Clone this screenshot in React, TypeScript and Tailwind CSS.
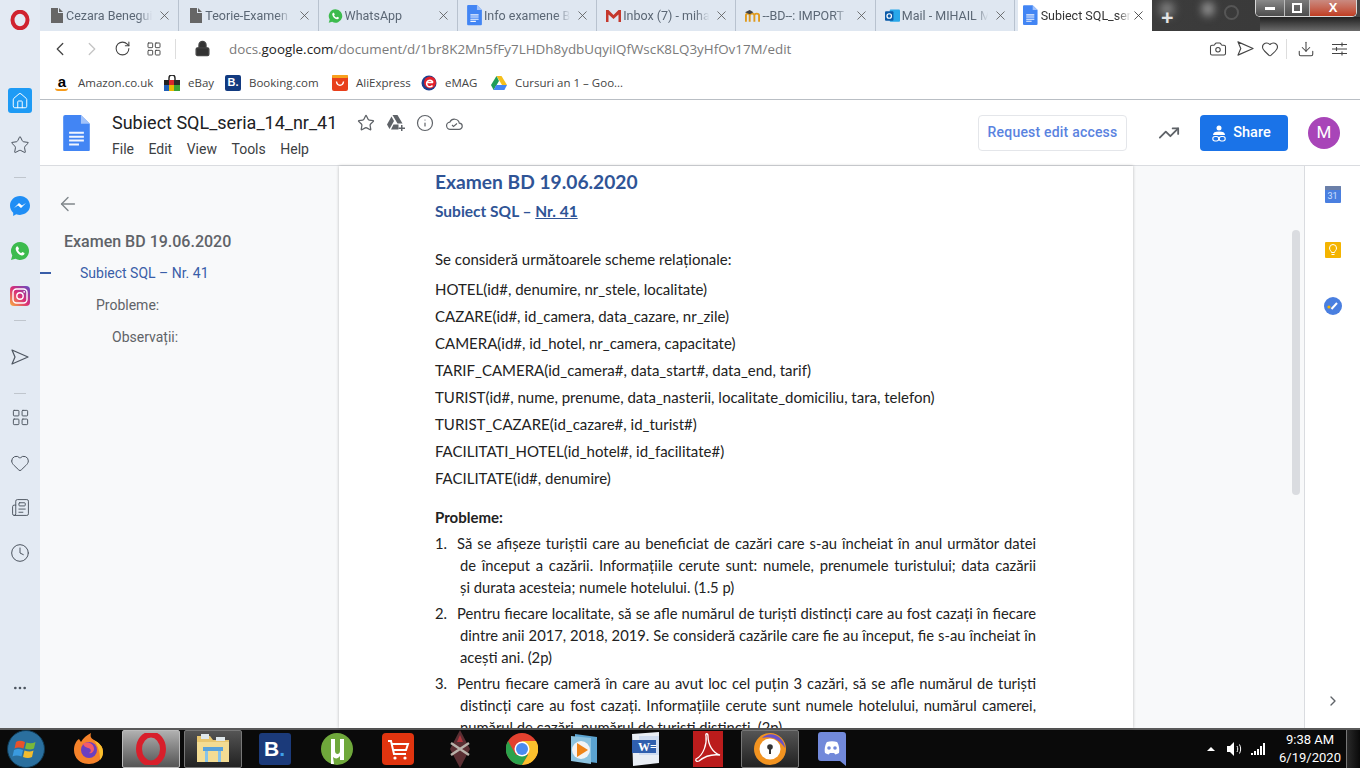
import React from "react";
import {
  ArrowLeft,
  Camera,
  ChevronLeft,
  ChevronRight,
  Clock,
  Download,
  Heart,
  House,
  Info,
  LayoutGrid,
  Lock,
  MoreHorizontal,
  Newspaper,
  RotateCw,
  Star,
  TrendingUp,
  X,
} from "lucide-react";

const tabs = [
  { title: "Cezara Benegui", icon: "file" },
  { title: "Teorie-Examen (", icon: "file" },
  { title: "WhatsApp", icon: "whatsapp" },
  { title: "Info examene BI", icon: "doc" },
  { title: "Inbox (7) - miha", icon: "gmail" },
  { title: "--BD--: IMPORT", icon: "moodle" },
  { title: "Mail - MIHAIL M", icon: "outlook" },
];

const schemes = [
  "HOTEL(id#, denumire, nr_stele, localitate)",
  "CAZARE(id#, id_camera, data_cazare, nr_zile)",
  "CAMERA(id#, id_hotel, nr_camera, capacitate)",
  "TARIF_CAMERA(id_camera#, data_start#, data_end, tarif)",
  "TURIST(id#, nume, prenume, data_nasterii, localitate_domiciliu, tara, telefon)",
  "TURIST_CAZARE(id_cazare#, id_turist#)",
  "FACILITATI_HOTEL(id_hotel#, id_facilitate#)",
  "FACILITATE(id#, denumire)",
];

const problems = [
  [
    "Să se afișeze turiștii care au beneficiat de cazări care s-au încheiat în anul următor datei",
    "de început a cazării. Informațiile cerute sunt: numele, prenumele turistului; data cazării",
    "și durata acesteia; numele hotelului. (1.5 p)",
  ],
  [
    "Pentru fiecare localitate, să se afle numărul de turiști distincți care au fost cazați în fiecare",
    "dintre anii 2017, 2018, 2019. Se consideră cazările care fie au început, fie s-au încheiat în",
    "acești ani. (2p)",
  ],
  [
    "Pentru fiecare cameră în care au avut loc cel puțin 3 cazări, să se afle numărul de turiști",
    "distincți care au fost cazați. Informațiile cerute sunt numele hotelului, numărul camerei,",
    "numărul de cazări, numărul de turiști distincți. (2p)",
  ],
];

const bookmarks = [
  { label: "Amazon.co.uk", icon: "amazon", width: "w-[110px]" },
  { label: "eBay", icon: "ebay", width: "w-[61px]" },
  { label: "Booking.com", icon: "booking", width: "w-[107px]" },
  { label: "AliExpress", icon: "ali", width: "w-[89px]" },
  { label: "eMAG", icon: "emag", width: "w-[70px]" },
  { label: "Cursuri an 1 – Goo...", icon: "drive", width: "w-[150px]" },
];

const DocIcon = ({ size = 16 }: { size?: number }) => (
  <svg width={size} height={size * 1.35} viewBox="0 0 27 37">
    <path d="M2 0h16l9 9v26a2 2 0 0 1-2 2H2a2 2 0 0 1-2-2V2a2 2 0 0 1 2-2z" fill="#4285f4" />
    <path d="M18 0l9 9h-9z" fill="#a1c2fa" />
    <path d="M6 17h15v2H6zM6 21h15v2H6zM6 25h15v2H6zM6 29h10v2H6z" fill="#f1f5fe" />
  </svg>
);

const SendOutline = ({ size }: { size: number }) => (
  <svg width={size} height={size} viewBox="0 0 18 18">
    <path d="M1 2l16 7-16 7 3-7z" fill="none" stroke="currentColor" strokeWidth="1.200" strokeLinejoin="round" />
  </svg>
);

const TabIcon = ({ type }: { type: string }) => {
  if (type === "file")
    return (
      <svg width="12" height="15" viewBox="0 0 12 15">
        <path d="M0 0h7v5h5v10H0zM8 0l4 4H8z" fill="#666" />
      </svg>
    );
  if (type === "whatsapp") return <WhatsAppIcon size={16} />;
  if (type === "doc") return <DocIcon size={15} />;
  if (type === "gmail")
    return (
      <svg width="15" height="12" viewBox="0 0 15 12">
        <path d="M0 0h2.500L7.500 5 12.500 0H15v12h-2.500V4.500L7.500 9 2.500 4.500V12H0z" fill="#c5382d" />
      </svg>
    );
  if (type === "moodle")
    return (
      <svg width="16" height="14" viewBox="0 0 16 14">
        <path d="M1 13V6.500C1 5 2 4.500 3 4.500S5 5 5 6.500V13M5 6.500C5 5 6 4.500 7.500 4.500S10 5 10 6.500V13M10 6.500C10 5 11 4.500 12.500 4.500S15 5 15 6.500V13" stroke="#e09a1d" strokeWidth="2" fill="none" />
        <path d="M0 3L5 .5 9 3 5 5z" fill="#444" />
      </svg>
    );
  return (
    <svg width="16" height="16" viewBox="0 0 16 16">
      <rect x="5" y="1" width="11" height="13" rx="1" fill="#28a8ea" />
      <rect x="0" y="3" width="9" height="10" rx="1" fill="#0a5aa8" />
      <circle cx="4.500" cy="8" r="2.400" fill="none" stroke="#fff" strokeWidth="1.300" />
    </svg>
  );
};

const WhatsAppIcon = ({ size }: { size: number }) => (
  <svg width={size} height={size} viewBox="0 0 20 20">
    <path d="M10 1a9 9 0 0 0-7.700 13.600L1 19l4.500-1.200A9 9 0 1 0 10 1z" fill="#3dbb4e" />
    <path d="M7 5.500c-.7.300-1.500 1.300-1.300 2.700.4 2.700 3.400 5.700 6 6.200 1.300.2 2.400-.6 2.700-1.400l.1-1-2.200-1.100-1 1.200c-1.300-.5-2.700-1.900-3.200-3.200l1-1L7.900 5.600z" fill="#fff" />
  </svg>
);

const BookmarkIcon = ({ type }: { type: string }) => {
  if (type === "amazon")
    return (
      <span className="relative flex h-4 w-4 items-start justify-center font-['Liberation_Sans',sans-serif] text-[15px] leading-[14px] font-bold text-black">
        a
        <span className="absolute bottom-0 left-[1px] h-[3px] w-[13px] rounded-b-full border-b-2 border-[#f79c1c]" />
      </span>
    );
  if (type === "ebay")
    return (
      <svg width="16" height="16" viewBox="0 0 16 16">
        <path d="M5 5V3a3 3 0 0 1 6 0v2" fill="none" stroke="#222" strokeWidth="1.400" />
        <path d="M0 5h5v5H0z" fill="#222" />
        <path d="M5 5h5v5H5z" fill="#d8262c" />
        <path d="M10 5h6v5h-6z" fill="#2a2a2a" />
        <path d="M0 10h5v6H0z" fill="#1f5fb8" />
        <path d="M5 10h5v6H5z" fill="#e9b800" />
        <path d="M10 10h6v6h-6z" fill="#3aa336" />
      </svg>
    );
  if (type === "booking")
    return (
      <span className="flex h-4 w-4 items-center justify-center rounded-[2px] bg-[#123a80] font-['Liberation_Sans',sans-serif] text-[11px] font-bold text-white">
        B.
      </span>
    );
  if (type === "ali")
    return (
      <svg width="16" height="16" viewBox="0 0 16 16">
        <rect width="16" height="16" rx="2" fill="#e8401c" />
        <rect width="16" height="3" rx="1" fill="#f8a01c" />
        <path d="M4.500 6.500c.5 5 6.500 5 7 0" fill="none" stroke="#fff" strokeWidth="1.400" />
      </svg>
    );
  if (type === "emag")
    return (
      <svg width="16" height="16" viewBox="0 0 16 16">
        <circle cx="8" cy="8" r="7.500" fill="#1a3f8f" />
        <circle cx="9" cy="7.500" r="6" fill="#e3202a" />
        <path d="M5.500 7.500h6.500M11.500 10.500A3.300 3.300 0 1 1 12 7.500" fill="none" stroke="#fff" strokeWidth="1.500" />
      </svg>
    );
  return (
    <svg width="16" height="14" viewBox="0 0 16 14">
      <path d="M5.500 0h5L16 9h-5z" fill="#f5bf1c" />
      <path d="M5.500 0L0 9l2.600 5L8 5z" fill="#1f9d58" />
      <path d="M2.600 14h10.800L16 9H5.300z" fill="#4285f4" />
    </svg>
  );
};

const BrowserTab = ({ title, icon }: { title: string; icon: string }) => (
  <div className="flex h-[31px] w-[139.3px] shrink-0 items-center border-r border-[#b8c2cf] pl-[9px] pr-[6px]">
    <div className="flex w-[15px] justify-center">
      <TabIcon type={icon} />
    </div>
    <span className="ml-[2px] mt-[1px] w-[90px] shrink-0 whitespace-nowrap font-['Roboto',sans-serif] text-[12.5px] text-[#5b6775] [mask-image:linear-gradient(to_right,black_80%,transparent_96%)]">
      {title}
    </span>
    <X className="ml-auto h-[15px] w-[15px] shrink-0 text-[#555]" strokeWidth={1.3} />
  </div>
);

const TabStrip = () => (
  <div className="flex h-[31px] shrink-0">
    <div className="flex bg-[#dfe7f1] pr-[3px]">
      {tabs.map((t) => (
        <BrowserTab key={t.title} {...t} />
      ))}
    </div>
    <div className="flex h-[31px] w-[134px] shrink-0 items-center rounded-t-[3px] bg-white pl-[5px] pr-[6px]">
      <DocIcon size={15} />
      <span className="ml-[3px] mt-[1px] whitespace-nowrap font-['Roboto',sans-serif] text-[12.5px] text-[#333] [mask-image:linear-gradient(to_right,black_85%,transparent)]">
        Subiect SQL_ser
      </span>
      <X className="ml-auto h-[15px] w-[15px] shrink-0 text-[#333]" strokeWidth={1.3} />
    </div>
    <div className="relative flex flex-1 items-start overflow-hidden bg-gradient-to-r from-[#3c3c3c] via-[#3a3a3a] to-[#444] pl-[9px]">
      <span className="absolute left-[8px] top-[2px] h-[14px] w-[14px] rounded-full bg-[#8a8a8a] blur-[5px]" />
      <span className="absolute left-[50px] top-[2px] h-[14px] w-[12px] rounded-full bg-[#999] blur-[4px]" />
      <span className="absolute left-[72px] top-[5px] h-[15px] w-[15px] rounded-full border-2 border-[#565656]" />
      <span className="absolute bottom-0 right-0 h-[14px] w-[100px] bg-gradient-to-b from-[#222] to-[#6c6c6c]" />
      <span className="relative mt-[6px] text-[22px] leading-[20px] font-bold text-[#e4e4e4]">+</span>
      <div className="relative ml-auto mr-[3px] flex h-[17px] w-[102px] overflow-hidden rounded-b-[5px] border border-t-0 border-[#d8d8d8]">
        <div className="flex w-[28px] items-center justify-center bg-gradient-to-b from-[#8a8a8a] to-[#4d4d4d]">
          <span className="h-[3px] w-[10px] bg-white" />
        </div>
        <div className="flex w-[26px] items-center justify-center border-x border-[#bbb] bg-gradient-to-b from-[#7a7a7a] to-[#4d4d4d]">
          <span className="h-[10px] w-[10px] border-2 border-white" />
        </div>
        <div className="flex flex-1 items-center justify-center bg-gradient-to-b from-[#c98a80] to-[#c03c20] font-['Liberation_Sans',sans-serif] text-[13px] leading-[14px] font-bold text-white">
          X
        </div>
      </div>
    </div>
  </div>
);

const AddressBar = () => (
  <div className="flex h-[35px] shrink-0 items-center bg-white pl-[9px] pr-[13px] text-[#444]">
    <ChevronLeft className="h-[22px] w-[22px]" strokeWidth={1.4} />
    <ChevronRight className="ml-[10px] h-[22px] w-[22px] text-[#c4c4c4]" strokeWidth={1.4} />
    <RotateCw className="ml-[11px] h-[17px] w-[17px]" strokeWidth={1.5} />
    <LayoutGrid className="ml-[15px] h-[16px] w-[16px]" strokeWidth={1.4} />
    <div className="ml-[13px] h-[20px] w-px bg-[#ddd]" />
    <Lock className="ml-[18px] h-[17px] w-[17px] fill-[#333]" strokeWidth={1.8} />
    <span className="ml-[18px] mt-[1px] font-['Open_Sans',sans-serif] text-[13.4px] text-[#7a7a7a]">
      docs.<span className="text-[#222]">google.com</span>/document/d/1br8K2Mn5fFy7LHDh8ydbUqyiIQfWscK8LQ3yHfOv17M/edit
    </span>
    <Camera className="ml-auto h-[18px] w-[18px]" strokeWidth={1.4} />
    <div className="ml-[10px]">
      <SendOutline size={17} />
    </div>
    <Heart className="ml-[7px] h-[18px] w-[18px]" strokeWidth={1.4} />
    <div className="ml-[7px] h-[20px] w-px bg-[#ddd]" />
    <Download className="ml-[10px] h-[18px] w-[18px]" strokeWidth={1.4} />
    <svg className="ml-[17px]" width="15" height="14" viewBox="0 0 15 14">
      <path d="M0 2.500h15M0 7h15M0 11.500h15M10 .5v4M4.500 5v4M10 9.500v4" stroke="currentColor" strokeWidth="1.100" />
    </svg>
  </div>
);

const BookmarksBar = () => (
  <div className="flex h-[34px] shrink-0 items-center border-b border-[#b9bec4] bg-white pl-[14px]">
    {bookmarks.map((b) => (
      <div key={b.label} className={`flex items-center gap-[8px] ${b.width}`}>
        <BookmarkIcon type={b.icon} />
        <span className="text-[11.5px] whitespace-nowrap text-[#444]">{b.label}</span>
      </div>
    ))}
  </div>
);

const DocsHeader = () => (
  <div className="flex h-[66px] shrink-0 border-b border-[#dadce0] bg-white font-['Roboto',sans-serif]">
    <div className="ml-[23px] mt-[15px]">
      <DocIcon size={27} />
    </div>
    <div className="ml-[22px] mt-[10px]">
      <div className="flex items-center">
        <span className="text-[18px] leading-[26px] text-[#202124]">Subiect SQL_seria_14_nr_41</span>
        <Star className="ml-[20px] h-[18px] w-[18px] text-[#5f6368]" strokeWidth={1.7} />
        <svg className="ml-[12px]" width="18" height="16" viewBox="0 0 18 16">
          <path d="M5.500 0h5l5 8.500h-5zM4.500 1.500L0 9.500 2.500 14 7 6zM4 14.500h7.500v-5H6.500z" fill="#5f6368" />
          <path d="M14 10v2.500h-2.500V14H14v2h1.500v-2H18v-1.500h-2.500V10z" fill="#5f6368" />
        </svg>
        <Info className="ml-[11px] h-[18px] w-[18px] text-[#5f6368]" strokeWidth={1.6} />
        <svg className="ml-[12px]" width="17" height="13" viewBox="0 0 17 13">
          <path d="M4.500 12.300a3.600 3.600 0 0 1-.6-7.200 5 5 0 0 1 9.400 1 3.100 3.100 0 0 1-.4 6.200z" fill="none" stroke="#5f6368" strokeWidth="1.200" />
          <path d="M6 8l1.500 1.500L11 6.500" fill="none" stroke="#5f6368" strokeWidth="1.100" />
        </svg>
      </div>
      <div className="mt-[3px] flex gap-[14.500px] text-[14px] leading-[20px] text-[#3c4043]">
        <span>File</span>
        <span>Edit</span>
        <span>View</span>
        <span>Tools</span>
        <span>Help</span>
      </div>
    </div>
    <div className="ml-auto mt-[15px] flex h-[36px] items-center pr-[20px]">
      <div className="flex h-[36px] w-[149px] items-center justify-center rounded-[4px] border border-[#e4e6ea] pb-[1px] text-[14px] font-medium tracking-[0.2px] text-[#5a83df]">
        Request edit access
      </div>
      <TrendingUp className="ml-[31px] h-[22px] w-[22px] text-[#5f6368]" strokeWidth={2} />
      <div className="ml-[20px] flex h-[36px] w-[88px] items-center justify-center gap-[7px] rounded-[4px] bg-[#1a73e8] pr-[5px] text-[14.500px] font-medium text-white">
        <svg width="14" height="17" viewBox="0 0 14 17">
          <circle cx="7" cy="3" r="2.500" fill="#fff" />
          <path d="M1 10c0-2.500 2-3.500 6-3.500s6 1 6 3.500z" fill="#fff" />
          <rect x=".8" y="11.500" width="6" height="4.500" rx="2.200" fill="none" stroke="#fff" strokeWidth="1.100" />
          <rect x="7.200" y="11.500" width="6" height="4.500" rx="2.200" fill="none" stroke="#fff" strokeWidth="1.100" />
        </svg>
        Share
      </div>
      <div className="ml-[20px] flex h-[32px] w-[32px] items-center justify-center rounded-full bg-[#a845b8] text-[17px] text-white">
        M
      </div>
    </div>
  </div>
);

const Outline = () => (
  <div className="relative w-[299px] shrink-0 bg-[#f8f9fa] pl-[24px] pt-[27px] font-['Roboto',sans-serif] text-[14px] text-[#5f6368]">
    <ArrowLeft className="ml-[-7px] h-[22px] w-[22px] text-[#80868b]" strokeWidth={1.5} />
    <div className="mt-[15px] text-[16px] leading-[24px] font-medium">Examen BD 19.06.2020</div>
    <div className="relative mt-[7px] pl-[16px] leading-[24px] text-[#3a5ea8]">
      <span className="absolute left-[-24px] top-[11px] h-[2px] w-[11px] bg-[#3a5ea8]" />
      Subiect SQL – Nr. 41
    </div>
    <div className="mt-[8px] pl-[32px] leading-[24px]">Probleme:</div>
    <div className="mt-[8px] pl-[48px] leading-[24px]">Observații:</div>
  </div>
);

const Page = () => (
  <div className="z-10 w-[794px] shrink-0 overflow-hidden bg-white pl-[96px] pr-[97px] font-['Lato',sans-serif] text-[15px] text-[#222] shadow-[0_0_3px_rgba(0,0,0,0.25)]">
    <div className="mt-[4px] text-[19.200px] leading-[24px] font-bold text-[#2f5496]">Examen BD 19.06.2020</div>
    <div className="mt-[5px] text-[15.500px] leading-[24px] font-bold text-[#2f5496]">
      Subiect SQL – <span className="underline">Nr. 41</span>
    </div>
    <div className="mt-[24px] leading-[24px]">Se consideră următoarele scheme relaționale:</div>
    <div className="mt-[5px]">
      {schemes.map((s) => (
        <div key={s} className="leading-[27px]">
          {s}
        </div>
      ))}
    </div>
    <div className="mt-[13px] leading-[24px] font-bold">Probleme:</div>
    <div className="mt-[3px] flex flex-col gap-[4px] text-[14.750px]">
      {problems.map((lines, i) => (
        <div key={i} className="relative pl-[25px] leading-[22px]">
          <span className="absolute left-0 top-0">{i + 1}.</span>
          {lines.map((line, j) => (
            <div
              key={line}
              className={
                j === 0
                  ? "ml-[-3px] text-justify whitespace-nowrap [text-align-last:justify]"
                  : j === 1
                    ? "text-justify whitespace-nowrap [text-align-last:justify]"
                    : "whitespace-nowrap"
              }
            >
              {line}
            </div>
          ))}
        </div>
      ))}
    </div>
  </div>
);

const RightRail = () => (
  <div className="flex w-[56px] shrink-0 flex-col items-center border-l border-[#dadce0] bg-white">
    <div className="mt-[20px] flex h-[17px] w-[16px] flex-col overflow-hidden rounded-[1px] bg-[#4a7fe0]">
      <div className="h-[4px] bg-[#6b7fa8]" />
      <span className="text-center font-['Roboto',sans-serif] text-[9px] leading-[12px] text-[#cfe0ff]">31</span>
    </div>
    <div className="mt-[39px] flex h-[16px] w-[16px] items-center justify-center rounded-[1px] bg-[#f4b400]">
      <svg width="8" height="12" viewBox="0 0 8 12">
        <path d="M2.500 8.500C2.500 7 .5 6.500.5 4a3.500 3.500 0 0 1 7 0c0 2.500-2 3-2 4.500zM2.500 10.500h3" fill="none" stroke="#fff" strokeWidth="1" />
      </svg>
    </div>
    <div className="mt-[39px] flex h-[18px] w-[18px] items-center justify-center rounded-full bg-[#4a7fe0]">
      <svg width="18" height="18" viewBox="0 0 18 18">
        <circle cx="5" cy="10" r="1.600" fill="#f4b400" />
        <path d="M7.500 12L13 6" stroke="#fff" strokeWidth="2" />
      </svg>
    </div>
    <ChevronRight className="mb-[19px] mt-auto h-[16px] w-[16px] text-[#5f6368]" strokeWidth={2} />
  </div>
);

const Gutter = () => (
  <div className="w-[171px] shrink-0 bg-[#f8f9fa] pl-[159px] pt-[64px]">
    <div className="h-[265px] w-[8px] rounded-[4px] bg-[#dadce0]" />
  </div>
);

const Sep = () => <div className="h-px w-[12px] bg-[#c0c6cd]" />;

const Sidebar = () => (
  <div className="flex w-[40px] shrink-0 flex-col items-center bg-[#e3eaf3] text-[#4d5560]">
    <svg className="mt-[10px]" width="20" height="20" viewBox="0 0 20 20">
      <ellipse cx="10" cy="10" rx="7.500" ry="8.300" fill="none" stroke="#d0222e" strokeWidth="4" />
    </svg>
    <div className="mt-[58px] flex h-[25px] w-[24px] items-center justify-center rounded-[3px] bg-[#1e9bf5]">
      <House className="h-[18px] w-[18px] text-white" strokeWidth={1.3} />
    </div>
    <Star className="mt-[22px] h-[20px] w-[20px]" strokeWidth={1.2} />
    <div className="mt-[22px]">
      <Sep />
    </div>
    <svg className="mt-[18px]" width="20" height="20" viewBox="0 0 20 20">
      <path d="M10 0C4.400 0 0 4.100 0 9.600c0 2.900 1.200 5.400 3.200 7.100V20l3-1.700c1.200.4 2.500.6 3.800.6 5.600 0 10-4.100 10-9.300S15.600 0 10 0z" fill="#1f8ef5" />
      <path d="M4 12l5-5 3 2.500L16 7l-5 5-3-2.500z" fill="#fff" />
    </svg>
    <div className="mt-[25px]">
      <WhatsAppIcon size={20} />
    </div>
    <svg className="mt-[25px]" width="20" height="20" viewBox="0 0 20 20">
      <defs>
        <linearGradient id="ig" x1="0" y1="1" x2="1" y2="0">
          <stop offset="0" stopColor="#f9b040" />
          <stop offset=".5" stopColor="#d92d77" />
          <stop offset="1" stopColor="#5f4fc6" />
        </linearGradient>
      </defs>
      <rect width="20" height="20" rx="4" fill="url(#ig)" />
      <rect x="3" y="3" width="14" height="14" rx="3.500" fill="none" stroke="#fff" strokeWidth="1.400" />
      <circle cx="10" cy="10" r="3.200" fill="none" stroke="#fff" strokeWidth="1.400" />
      <circle cx="14.200" cy="5.800" r=".9" fill="#fff" />
    </svg>
    <div className="mt-[14px]">
      <Sep />
    </div>
    <div className="mt-[27px]">
      <SendOutline size={18} />
    </div>
    <div className="mt-[27px]">
      <Sep />
    </div>
    <LayoutGrid className="mt-[14px] h-[19px] w-[19px]" strokeWidth={1.2} />
    <Heart className="mt-[26px] h-[20px] w-[20px]" strokeWidth={1.2} />
    <Newspaper className="mt-[25px] h-[19px] w-[19px]" strokeWidth={1.2} />
    <Clock className="mt-[26px] h-[20px] w-[20px]" strokeWidth={1.2} />
    <MoreHorizontal className="mb-[32px] mt-auto h-[16px] w-[16px]" strokeWidth={2} />
  </div>
);

const taskIcons = ["firefox", "opera", "folder", "booking", "utorrent", "cart", "game", "chrome", "media", "word", "pdf", "avast", "discord"];

const TaskIcon = ({ type }: { type: string }) => {
  switch (type) {
    case "firefox":
      return (
        <svg width="30" height="32" viewBox="0 0 30 32">
          <path d="M15 31C6 31 0 25 0 17 0 12 2 8 5 6l2 3c2-4 6-7 10-9-1 4 0 5 3 7 5 3 9 6 9 12 0 7-6 12-14 12z" fill="#f5822a" />
          <path d="M20 7c5 3 9 6 9 12 0 3-1 6-3 8 0-8-2-14-6-20z" fill="#fbc02d" />
          <circle cx="15" cy="17" r="8" fill="#6a3fc0" />
          <path d="M9 11c4-3 11-1 11 5 0 3-3 5-5 4 3-1 2-5-1-5-3-1-4-2-5-4z" fill="#f35c6a" />
        </svg>
      );
    case "opera":
      return (
        <svg width="30" height="32" viewBox="0 0 30 32">
          <ellipse cx="15" cy="16" rx="12" ry="14.500" fill="none" stroke="#d81f2b" strokeWidth="6" />
        </svg>
      );
    case "folder":
      return (
        <svg width="34" height="32" viewBox="0 0 34 32">
          <path d="M1 3h13l3 4h16v22H1z" fill="#e8c66f" />
          <path d="M5 1h8v5H5zM20 4h9v4h-9z" fill="#dfe8ec" />
          <path d="M1 9h32v20H1z" fill="#f3dc93" />
          <path d="M7 14h20v4H7z" fill="#59a3dc" />
          <path d="M9 18h3v11H9zM22 18h3v11h-3z" fill="#86c3ea" />
        </svg>
      );
    case "booking":
      return (
        <span className="flex h-[32px] w-[32px] items-center justify-center rounded-[3px] bg-[#1b3a7a] font-['Liberation_Sans',sans-serif] text-[21px] font-bold text-white">
          B<span className="text-[#3fa0e8]">.</span>
        </span>
      );
    case "utorrent":
      return (
        <svg width="32" height="32" viewBox="0 0 32 32">
          <circle cx="16" cy="16" r="16" fill="#6fa83b" />
          <path d="M10 6h4v12c0 4 5 4 5 0V6h4v21h-4v-4c-2 3-5 3-7 1l1 7h-3z" fill="#fff" />
        </svg>
      );
    case "cart":
      return (
        <svg width="32" height="32" viewBox="0 0 32 32">
          <rect width="32" height="32" rx="4" fill="#e0340f" />
          <path d="M6 8h3l3 13h12M10 11h16l-2 6H12" fill="none" stroke="#fff" strokeWidth="2" />
          <circle cx="13" cy="25" r="1.600" fill="#fff" />
          <circle cx="23" cy="25" r="1.600" fill="#fff" />
        </svg>
      );
    case "game":
      return (
        <svg width="22" height="38" viewBox="0 0 22 38">
          <path d="M11 0l10 19-10 19L1 19z" fill="#5a2f33" />
          <path d="M2 13l18 12M20 13L2 25" stroke="#b9b2aa" strokeWidth="2.500" />
          <path d="M11 5l3 7h-6z" fill="#b3353d" />
        </svg>
      );
    case "chrome":
      return (
        <svg width="32" height="32" viewBox="0 0 32 32">
          <circle cx="16" cy="16" r="16" fill="#e2412f" />
          <path d="M16 32A16 16 0 0 1 2 8l8 14h12z" fill="#2ca24c" />
          <path d="M16 32A16 16 0 0 0 30 8H16l6 14z" fill="#fbc02d" />
          <circle cx="16" cy="16" r="7.500" fill="#fff" />
          <circle cx="16" cy="16" r="6" fill="#4a8bf0" />
        </svg>
      );
    case "media":
      return (
        <svg width="28" height="32" viewBox="0 0 28 32">
          <path d="M5 1l22 3v26L5 27z" fill="#5ba3d0" />
          <path d="M1 3l20 2v26L1 28z" fill="#8cc3e0" />
          <circle cx="11" cy="17" r="9" fill="#f4f4f4" />
          <path d="M7 10l11 7-11 7z" fill="#ef8418" />
        </svg>
      );
    case "word":
      return (
        <svg width="30" height="34" viewBox="0 0 30 34">
          <path d="M1 2l27-2v31L2 34z" fill="#e9eef5" />
          <path d="M8 4h20v19H8z" fill="#cfdcf0" />
          <path d="M1 8h24v13H1z" fill="#2f5fae" />
          <text x="7" y="19" fontFamily="Liberation Serif" fontSize="12" fontWeight="700" fill="#fff">W=</text>
        </svg>
      );
    case "pdf":
      return (
        <svg width="30" height="36" viewBox="0 0 30 36">
          <rect width="30" height="36" fill="#bb1c1c" />
          <path d="M3 28c8-4 11-16 10-23-1-3 2-3 2 0 0 9 5 17 12 19-8-1-15 1-21 6-2 1-4 0-3-2z" fill="none" stroke="#fff" strokeWidth="1.300" />
        </svg>
      );
    case "avast":
      return (
        <svg width="32" height="34" viewBox="0 0 32 34">
          <circle cx="16" cy="17" r="16" fill="#f29320" />
          <path d="M8 6C16-2 30 4 31 16 24 6 16 4 8 6z" fill="#6a52c8" />
          <circle cx="16" cy="17" r="10.500" fill="#fff" />
          <circle cx="16" cy="15" r="2.800" fill="#333" />
          <path d="M15 15h2v7h-2z" fill="#333" />
        </svg>
      );
    default:
      return (
        <svg width="28" height="34" viewBox="0 0 28 34">
          <path d="M3 0h22a3 3 0 0 1 3 3v31l-6-5H3a3 3 0 0 1-3-3V3a3 3 0 0 1 3-3z" fill="#7289da" />
          <path d="M7 21c-1-5 1-10 2-11 3-1 7-1 10 0 1 1 3 6 2 11-2 1-4 2-4 1l-1-1h-4l-1 1c0 1-2 0-4-1z" fill="#fff" />
          <circle cx="11" cy="16" r="1.800" fill="#7289da" />
          <circle cx="17" cy="16" r="1.800" fill="#7289da" />
        </svg>
      );
  }
};

const Taskbar = () => (
  <div className="flex h-[40px] shrink-0 items-center border-t-2 border-[#5a5a5a] bg-[#0a0a0a]">
    <div className="flex w-[58px] shrink-0 pl-[7px]">
      <svg width="38" height="38" viewBox="0 0 38 38">
        <circle cx="19" cy="19" r="18.500" fill="#2a6f9e" stroke="#0f3a55" />
        <path d="M9 12c3-2 6-1 9 0l-1.500 6.500c-3-1-6-1.500-9 0z" fill="#e8522b" />
        <path d="M19.500 12.500c3 1 6 1 9-.5l-1.500 6.500c-3 1.500-6 1-9 0z" fill="#7ab83a" />
        <path d="M7 20c3-1.500 6-1 9 0l-1.500 6.500c-3-1-6-1.500-9 0z" fill="#3a9be0" />
        <path d="M17.500 20.500c3 1 6 1.500 9 0L25 27c-3 1.500-6 1-9 0z" fill="#f2bc2e" />
      </svg>
    </div>
    {taskIcons.map((t) => (
      <div key={t} className="flex w-[61.9px] shrink-0 justify-center">
        <div
          className={
            t === "opera"
              ? "flex h-[38px] w-[58px] items-center justify-center rounded-[2px] border border-[#bbb] bg-gradient-to-b from-[#b0b0b0] to-[#555]"
              : t === "folder" || t === "avast"
                ? "flex h-[38px] w-[58px] items-center justify-center rounded-[2px] border border-[#777] bg-gradient-to-b from-[#555] to-[#222]"
                : "flex h-[38px] w-[58px] items-center justify-center"
          }
        >
          <TaskIcon type={t} />
        </div>
      </div>
    ))}
    <div className="ml-auto flex h-full items-center text-white">
      <span className="h-0 w-0 border-x-[4px] border-b-[4px] border-x-transparent border-b-white" />
      <svg className="ml-[12px]" width="16" height="14" viewBox="0 0 16 14">
        <path d="M0 4h3l4-4v14l-4-4H0z" fill="#fff" />
        <path d="M10 4c1 2 1 4 0 6M12.500 2.500c1.500 3 1.500 6 0 9" stroke="#fff" fill="none" />
      </svg>
      <svg className="ml-[8px]" width="14" height="12" viewBox="0 0 14 12">
        <path d="M0 10h2v2H0zM3 8h2v4H3zM6 6h2v6H6zM9 3h2v9H9zM12 0h2v12h-2z" fill="#fff" />
      </svg>
      <div className="ml-[14px] w-[62px] text-center font-['Roboto',sans-serif] text-[13px] leading-[18px]">
        <div>9:38 AM</div>
        <div>6/19/2020</div>
      </div>
      <div className="ml-[5px] h-full w-[14px] border-l border-[#777] bg-gradient-to-r from-[#2a2a2a] to-[#0a0a0a]" />
    </div>
  </div>
);

export default function App() {
  return (
    <div className="flex h-[768px] w-[1360px] flex-col overflow-hidden bg-white font-['Open_Sans',sans-serif]">
      <div className="flex min-h-0 flex-1">
        <Sidebar />
        <div className="flex min-w-0 flex-1 flex-col">
          <TabStrip />
          <AddressBar />
          <BookmarksBar />
          <DocsHeader />
          <div className="flex min-h-0 flex-1">
            <Outline />
            <Page />
            <Gutter />
            <RightRail />
          </div>
        </div>
      </div>
      <Taskbar />
    </div>
  );
}
